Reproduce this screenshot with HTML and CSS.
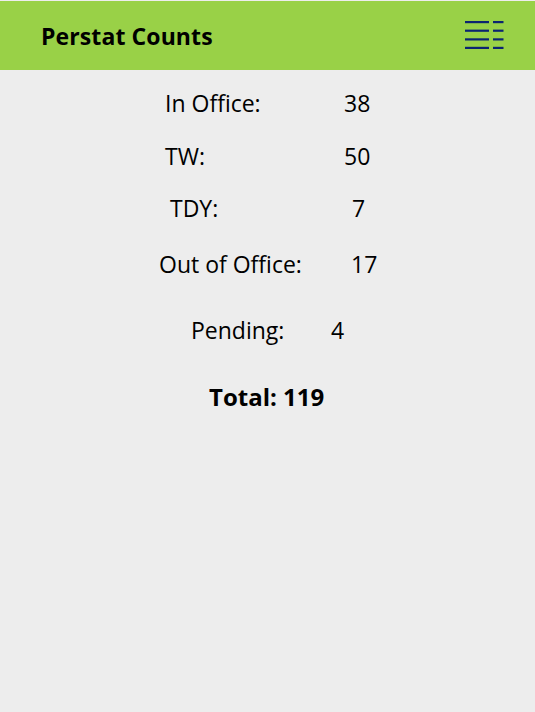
FILE: index.html
```html
<!DOCTYPE html>
<html>
<head>
<meta charset="utf-8">
<link rel="stylesheet" href="styles.css">
</head>
<body>
<header class="bar">
  <h1 class="title">Perstat Counts</h1>
  <svg class="menu" width="40" height="30" viewBox="0 0 40 30" aria-hidden="true">
    <g fill="#0b2470">
      <rect x="0" y="0" width="24" height="2.2"/>
      <rect x="28" y="0" width="10.5" height="2.2"/>
      <rect x="0" y="8.6" width="24" height="2.2"/>
      <rect x="28" y="8.6" width="10.5" height="2.2"/>
      <rect x="0" y="17.3" width="24" height="2.2"/>
      <rect x="28" y="17.3" width="10.5" height="2.2"/>
      <rect x="0" y="25.8" width="24" height="2.2"/>
      <rect x="28" y="25.8" width="10.5" height="2.2"/>
    </g>
  </svg>
</header>
<main class="counts">
  <div class="row r1"><span class="label">In Office:</span><span class="val">38</span></div>
  <div class="row r2"><span class="label">TW:</span><span class="val">50</span></div>
  <div class="row r3"><span class="label">TDY:</span><span class="val">7</span></div>
  <div class="row r4"><span class="label">Out of Office:</span><span class="val">17</span></div>
  <div class="row r5"><span class="label">Pending:</span><span class="val">4</span></div>
  <div class="row total">Total: 119</div>
</main>
</body>
</html>
```
FILE: styles.css
```css
html, body {
  margin: 0;
  padding: 0;
}
body {
  background: #ededed;
  font-family: "Open Sans", "Noto Sans", sans-serif;
  color: #000;
  width: 535px;
  height: 712px;
  overflow: hidden;
}
.bar {
  margin-top: 1px;
  height: 69px;
  background: #99d147;
  display: flex;
  align-items: center;
  justify-content: space-between;
  padding: 0 30px 0 41px;
}
.title {
  margin: 0;
  font-size: 23px;
  font-weight: 700;
  line-height: 30px;
  letter-spacing: 0.1px;
}
.menu {
  display: block;
  margin-top: 1px;
}
.counts {
  display: flex;
  flex-direction: column;
}
.row {
  display: flex;
  font-size: 23px;
  font-weight: 500;
  line-height: 30px;
  height: 30px;
}
.label {
  display: block;
}
.r1 { margin-top: 18px; padding-left: 165px; }
.r1 .label { width: 179px; }
.r2 { margin-top: 23px; padding-left: 165px; }
.r2 .label { width: 179px; }
.r3 { margin-top: 22px; padding-left: 170px; }
.r3 .label { width: 182px; }
.r4 { margin-top: 26px; padding-left: 159px; }
.r4 .label { width: 192px; }
.r5 { margin-top: 36px; padding-left: 191px; }
.r5 .label { width: 140px; }
.total {
  margin-top: 37px;
  padding-left: 209px;
  font-size: 24px;
  font-weight: 700;
}
```
